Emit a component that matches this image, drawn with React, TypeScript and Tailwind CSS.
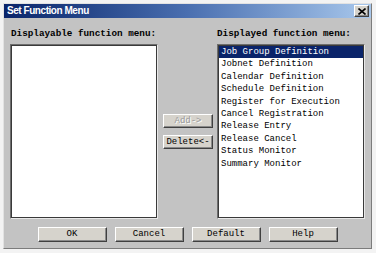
import React from "react";

const items = [
  "Job Group Definition",
  "Jobnet Definition",
  "Calendar Definition",
  "Schedule Definition",
  "Register for Execution",
  "Cancel Registration",
  "Release Entry",
  "Release Cancel",
  "Status Monitor",
  "Summary Monitor",
];

const mono = "font-['Liberation_Mono','Courier_New',monospace]";

// raised classic button face
const raised =
  "bg-[#d6d3cc] border border-t-white border-l-white border-r-[#404040] border-b-[#404040] shadow-[inset_-1px_-1px_0_#8a8a8a]";

// sunken list box
const sunken =
  "bg-white border border-t-[#6e6e6e] border-l-[#6e6e6e] border-r-[#e8e8e8] border-b-[#e8e8e8] shadow-[inset_1px_1px_0_#3a3a3a,inset_-1px_-1px_0_#3a3a3a]";

function WinButton({
  label,
  disabled,
  className,
}: {
  label: string;
  disabled?: boolean;
  className?: string;
}) {
  return (
    <button
      className={`${raised} ${mono} flex items-center justify-center text-[9px] leading-none ${
        disabled ? "text-[#9a9a9a] [text-shadow:1px_1px_0_#fff]" : "text-black"
      } ${className ?? ""}`}
    >
      {label}
    </button>
  );
}

export default function App() {
  return (
    <div className="w-[376px] h-[253px] bg-[#f3f3f3] pt-[3px] pl-[3px] pr-[4px] pb-[4px]">
      <div className="w-[369px] h-[246px] bg-[#c3c3c3] border border-t-[#e2e2e2] border-l-[#e2e2e2] border-r-[#7c7c7c] border-b-[#7c7c7c] flex flex-col">
        {/* title bar */}
        <div className="h-[14px] bg-gradient-to-r from-[#0a246a] via-[#4a6fb0] to-[#a9c8ec] flex items-center justify-between pl-[3px] pr-[2px]">
          <span className="font-['Liberation_Sans',Arial,sans-serif] font-bold text-[10px] tracking-[-0.45px] text-white leading-none">
            Set Function Menu
          </span>
          <span className={`${raised} w-[15px] h-[12px] flex items-center justify-center`}>
            <svg width="8" height="7" viewBox="0 0 8 7">
              <path d="M0.5 0.5 L7.5 6.5 M7.5 0.5 L0.5 6.5" stroke="#000" strokeWidth="1.6" />
            </svg>
          </span>
        </div>

        {/* body */}
        <div className="flex flex-col px-[6px] pt-[10px]">
          <div className="flex">
            <div className="w-[148px] flex flex-col">
              <div className={`${mono} font-bold text-[9.3px] leading-[12px] text-black pl-[1px]`}>
                Displayable function menu:
              </div>
              <div className={`${sunken} mt-[4px] h-[175px]`} />
            </div>

            <div className="w-[59px] flex flex-col pt-[86px] pl-[5px] gap-[7px]">
              <WinButton label="Add->" disabled className="w-[50px] h-[14px]" />
              <WinButton label="Delete<-" className="w-[50px] h-[14px]" />
            </div>

            <div className="w-[148px] flex flex-col">
              <div className={`${mono} font-bold text-[9.3px] leading-[12px] text-black`}>
                Displayed function menu:
              </div>
              <div className={`${sunken} mt-[4px] h-[175px] p-[1px]`}>
                {items.map((it, i) => (
                  <div
                    key={it}
                    className={`${mono} text-[9px] leading-[12.4px] h-[12.4px] pl-[2px] ${
                      i === 0 ? "bg-[#0a246a] text-white" : "text-black"
                    }`}
                  >
                    {it}
                  </div>
                ))}
              </div>
            </div>
          </div>

          <div className="flex justify-center gap-[8px] mt-[8px]">
            {["OK", "Cancel", "Default", "Help"].map((b) => (
              <WinButton key={b} label={b} className="w-[69px] h-[15px]" />
            ))}
          </div>
        </div>
      </div>
    </div>
  );
}
